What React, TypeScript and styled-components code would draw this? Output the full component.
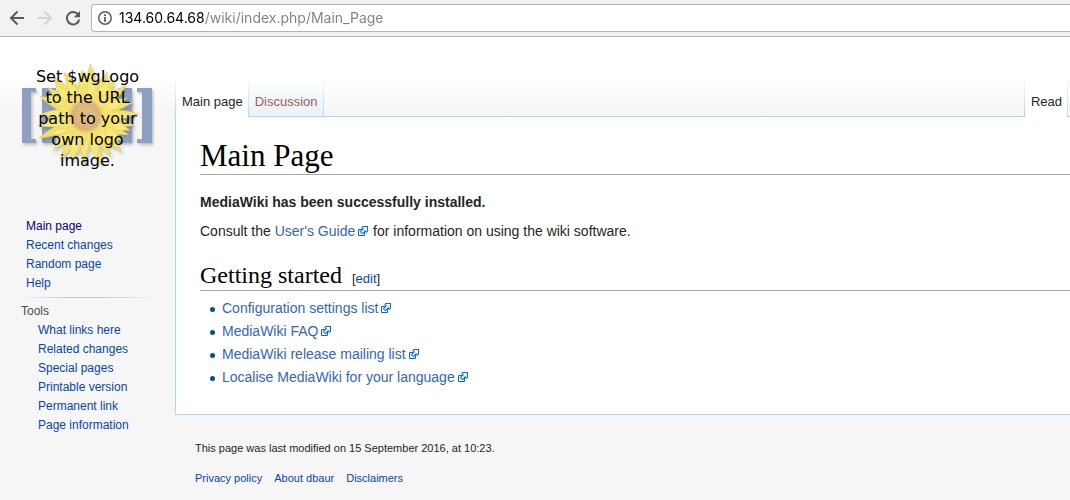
import React from "react";
import styled, { createGlobalStyle, css } from "styled-components";

const sans = `"Liberation Sans", Arial, Helvetica, sans-serif`;
const serif = `"Liberation Serif", Georgia, serif`;
const line = "#a7d7f9";

const GlobalStyle = createGlobalStyle`
  *, *::before, *::after { box-sizing: border-box; }
  html { min-height: 100%; background: #f6f6f6; }
  body { margin: 0; font-family: ${sans}; color: #252525; overflow-x: hidden; }
  ul { list-style: none; margin: 0; padding: 0; }
  a { text-decoration: none; color: #0645ad; }
  a:hover { text-decoration: underline; }
`;

/* Browser bar */
const Toolbar = styled.div`
  display: flex;
  align-items: center;
  height: 37px;
  padding-left: 7px;
  background: #f2f2f2;
  border-bottom: 1px solid #b6b6b6;
`;

const ToolButton = styled.button`
  display: flex;
  align-items: center;
  justify-content: center;
  width: 20px;
  height: 28px;
  margin-right: 8px;
  padding: 0;
  border: 0;
  background: none;
  color: #5a5a5a;
  &:disabled { color: #d4d4d4; }
`;

const AddressBar = styled.label`
  display: flex;
  align-items: center;
  flex: 1;
  gap: 7px;
  height: 28px;
  padding-left: 6px;
  background: #fff;
  border: 1px solid #b3b3b3;
  border-right: 0;
  border-radius: 4px 0 0 4px;
  color: #5a5a5a;
`;

const AddressInput = styled.input`
  flex: 1;
  min-width: 0;
  height: 24px;
  padding: 0;
  border: 0;
  outline: 0;
  font: 14px/24px Inter, Roboto, sans-serif;
  color: #808080;
  background: linear-gradient(90deg, #000 86px, #808080 86px);
  background-clip: text;
  -webkit-background-clip: text;
  -webkit-text-fill-color: transparent;
`;

/* Page frame */
const Page = styled.div`
  display: grid;
  grid-template-columns: 175px minmax(0, 1fr);
  padding-bottom: 12px;
  background: linear-gradient(#fff 40px, #f6f6f6 80px);
`;

const Sidebar = styled.aside`
  padding: 20px 20px 0;
`;

const LogoLink = styled.a`
  display: grid;
  width: 135px;
  height: 135px;
  &:hover { text-decoration: none; }
  > * { grid-area: 1 / 1; }
`;

const LogoText = styled.span`
  padding-top: 9px;
  font: 16px/21px "DejaVu Sans", sans-serif;
  text-align: center;
  color: #000;
  z-index: 1;
`;

const Portal = styled.nav<{ $nested?: boolean }>`
  font-size: 12px;
  line-height: 19px;
  ${(p) =>
    p.$nested
      ? css`
          ul { padding-left: 18px; }
        `
      : css`
          padding-top: 25px;
          ul { padding-left: 6px; }
        `}
`;

const PortalTitle = styled.h3`
  margin: 0;
  padding-left: 1px;
  font-size: 12px;
  line-height: 19px;
  font-weight: normal;
  color: #4d4d4d;
`;

const SideLink = styled.a<{ $visited?: boolean }>`
  color: ${(p) => (p.$visited ? "#0b0080" : "#0645ad")};
`;

const Divider = styled.div`
  height: 1px;
  margin: 4px 0;
  background: linear-gradient(90deg, transparent, #c8ccd1 33%, #c8ccd1 66%, transparent);
`;

const Main = styled.div`
  padding-top: 40px;
`;

const TabBar = styled.div`
  display: flex;
  justify-content: space-between;
  height: 40px;
`;

const edge = css`
  content: "";
  width: 1px;
  background: linear-gradient(#fff, ${line});
`;

const TabGroup = styled.nav`
  display: flex;
  &::before { ${edge} }
`;

const TabRule = styled.div`
  flex: 1;
  border-bottom: 1px solid ${line};
`;

const Tab = styled.a<{ $selected?: boolean; $missing?: boolean }>`
  display: flex;
  font-size: 13px;
  line-height: 16px;
  color: ${(p) => (p.$missing ? "#a55858" : "#252525")};
  span {
    padding: 17px 5px 0 6px;
    background: ${(p) => (p.$selected ? "#fff" : "linear-gradient(#fff, #e8f2f8)")};
    border-bottom: ${(p) => (p.$selected ? "0" : `1px solid ${line}`)};
  }
  &::after { ${edge} }
`;

const TabEnd = styled.div`
  width: 2px;
  border-bottom: 1px solid ${line};
`;

const Content = styled.main`
  padding: 20px 0 25px 24px;
  background: #fff;
  border-left: 1px solid ${line};
  border-bottom: 1px solid ${line};
  font-size: 14px;
  line-height: 23px;
`;

const Title = styled.h1`
  margin: 0 0 16px;
  border-bottom: 1px solid #aaa;
  font: 31px/37px ${serif};
  color: #000;
`;

const Paragraph = styled.p`
  margin: 0 0 6px;
`;

const SectionTitle = styled.h2`
  display: flex;
  align-items: baseline;
  gap: 10px;
  margin: 17px 0 6px;
  border-bottom: 1px solid #aaa;
  font: 24px/30px ${serif};
  color: #000;
`;

const EditSection = styled.span`
  font: 13px/16px ${sans};
  color: #252525;
`;

const External = styled.a`
  color: #3366bb;
  svg { margin-left: 2px; vertical-align: -1px; }
`;

const BulletItem = styled.li`
  display: flex;
  align-items: center;
  gap: 7px;
  padding-left: 10px;
  &::before {
    content: "";
    width: 5px;
    height: 5px;
    margin-top: 2px;
    border-radius: 50%;
    background: #00528c;
  }
`;

const Footer = styled.footer`
  padding: 23px 20px 0;
  font-size: 11px;
  line-height: 20px;
`;

const FooterLinks = styled.ul`
  display: flex;
  gap: 12px;
  padding-top: 10px;
`;

const ExternalIcon = () => (
  <svg width="12" height="12" viewBox="0 0 12 12" aria-hidden="true">
    <path fill="#fff" stroke="#06c" d="M1.5 4.518h5.982V10.5H1.5z" />
    <path fill="#06f" d="M5.765 1H11v5.39L9.427 7.937l-1.31-1.31L5.393 9.35l-2.69-2.688 2.81-2.808L4.2 2.544z" />
    <path fill="#fff" d="M9.995 2.004l.022 4.885L8.2 5.07 5.32 7.95 4.09 6.723l2.882-2.88-1.85-1.852z" />
  </svg>
);

const Arrow = ({ back }: { back?: boolean }) => (
  <svg width="16" height="16" viewBox="0 0 16 16" fill="none" stroke="currentColor" strokeWidth="2" aria-hidden="true">
    <path d={back ? "M15 8H2.5M8.5 1.5L2 8l6.500 6.500" : "M1 8h12.500M7.500 1.500L14 8l-6.500 6.500"} />
  </svg>
);

const ReloadIcon = () => (
  <svg width="16" height="16" viewBox="0 0 16 16" aria-hidden="true">
    <path d="M13.300 4.800A6.200 6.200 0 1 0 14.200 9.500" fill="none" stroke="currentColor" strokeWidth="2" />
    <path d="M15 1v6.200H8.800z" fill="currentColor" />
  </svg>
);

const InfoIcon = () => (
  <svg width="14" height="14" viewBox="0 0 14 14" aria-hidden="true">
    <circle cx="7" cy="7" r="6.200" fill="none" stroke="currentColor" strokeWidth="1.500" />
    <path d="M6.100 3.200h1.800v1.700H6.100zM6.100 6h1.800v4.800H6.100z" fill="currentColor" />
  </svg>
);

const petals = (count: number, length: number, width: number, shift: number) =>
  Array.from({ length: count }, (_, i) => {
    const l = length - ((i * 7) % 5) * 1.5;
    const bend = ((i * 5) % 7) - 3;
    return (
      <path
        key={i}
        transform={`rotate(${shift + (i * 360) / count})`}
        d={`M-3-10Q${-width - 1}${-l * 0.6} ${bend}${-l}Q${width + 1}${-l * 0.65} 3-10z`}
      />
    );
  });

const Sunflower = () => (
  <svg width="135" height="135" viewBox="0 0 135 135" aria-hidden="true">
    <defs>
      <filter id="shade" x="-20%" y="-20%" width="140%" height="140%">
        <feDropShadow dx="1.500" dy="2" stdDeviation="1.500" floodColor="#666" floodOpacity="0.4" />
      </filter>
      <radialGradient id="disc">
        <stop offset="0" stopColor="#d0bf94" />
        <stop offset="0.45" stopColor="#e2bf7c" />
        <stop offset="0.75" stopColor="#dfb67c" />
        <stop offset="1" stopColor="#ecd172" />
      </radialGradient>
    </defs>
    <g fill="#8e9fc2" filter="url(#shade)">
      <path d="M2 31h14v4h-5v47h5v4H2zM22 31h14v55H22zM98 31h14v55H98zM117 31h15v55h-15v-4h5V35h-5z" />
    </g>
    <g transform="translate(66 59)" filter="url(#shade)">
      <g fill="#f0e06c" stroke="#e2ce5c" strokeWidth="0.5">{petals(23, 52, 6, 8)}</g>
      <g fill="#f7ea7c" stroke="#e8d563" strokeWidth="0.5">{petals(19, 46, 6, 12)}</g>
      <g fill="#f5e370" stroke="#e5cf60" strokeWidth="0.5">{petals(19, 33, 5, 0)}</g>
    </g>
    <circle cx="66" cy="59" r="17" fill="url(#disc)" />
    <circle cx="66" cy="59" r="13" fill="none" stroke="#b98860" strokeWidth="3" strokeDasharray="1 2" opacity="0.35" />
    <circle cx="66" cy="59" r="9" fill="none" stroke="#c49b69" strokeWidth="3" strokeDasharray="1 2" opacity="0.35" />
    <circle cx="66" cy="59" r="4" fill="none" stroke="#ad9b80" strokeWidth="3" strokeDasharray="1 2" opacity="0.35" />
  </svg>
);

const toolLinks = [
  "What links here",
  "Related changes",
  "Special pages",
  "Printable version",
  "Permanent link",
  "Page information",
];

const startLinks = [
  "Configuration settings list",
  "MediaWiki FAQ",
  "MediaWiki release mailing list",
  "Localise MediaWiki for your language",
];

export default function App() {
  return (
    <>
      <GlobalStyle />
      <Toolbar>
        <ToolButton aria-label="Back"><Arrow back /></ToolButton>
        <ToolButton aria-label="Forward" disabled><Arrow /></ToolButton>
        <ToolButton aria-label="Reload"><ReloadIcon /></ToolButton>
        <AddressBar>
          <InfoIcon />
          <AddressInput aria-label="Address" defaultValue="134.60.64.68/wiki/index.php/Main_Page" />
        </AddressBar>
      </Toolbar>
      <Page>
        <Sidebar>
          <LogoLink href="#">
            <Sunflower />
            <LogoText>
              Set $wgLogo<br />to the URL<br />path to your<br />own logo<br />image.
            </LogoText>
          </LogoLink>
          <Portal aria-label="Navigation">
            <ul>
              <li><SideLink href="#" $visited>Main page</SideLink></li>
              <li><SideLink href="#">Recent changes</SideLink></li>
              <li><SideLink href="#">Random page</SideLink></li>
              <li><SideLink href="#">Help</SideLink></li>
            </ul>
          </Portal>
          <Divider />
          <Portal $nested aria-label="Tools">
            <PortalTitle>Tools</PortalTitle>
            <ul>
              {toolLinks.map((t) => (
                <li key={t}><SideLink href="#">{t}</SideLink></li>
              ))}
            </ul>
          </Portal>
        </Sidebar>
        <Main>
          <TabBar>
            <TabGroup aria-label="Namespaces">
              <Tab href="#" $selected><span>Main page</span></Tab>
              <Tab href="#" $missing><span>Discussion</span></Tab>
            </TabGroup>
            <TabRule />
            <TabGroup aria-label="Views">
              <Tab href="#" $selected><span>Read</span></Tab>
            </TabGroup>
            <TabEnd />
          </TabBar>
          <Content>
            <Title>Main Page</Title>
            <Paragraph><b>MediaWiki has been successfully installed.</b></Paragraph>
            <Paragraph>
              Consult the <External href="#">User's Guide<ExternalIcon /></External> for information on using the wiki software.
            </Paragraph>
            <SectionTitle>
              Getting started
              <EditSection>[<a href="#">edit</a>]</EditSection>
            </SectionTitle>
            <ul>
              {startLinks.map((t) => (
                <BulletItem key={t}><External href="#">{t}<ExternalIcon /></External></BulletItem>
              ))}
            </ul>
          </Content>
          <Footer>
            <div>This page was last modified on 15 September 2016, at 10:23.</div>
            <FooterLinks>
              <li><a href="#">Privacy policy</a></li>
              <li><a href="#">About dbaur</a></li>
              <li><a href="#">Disclaimers</a></li>
            </FooterLinks>
          </Footer>
        </Main>
      </Page>
    </>
  );
}
